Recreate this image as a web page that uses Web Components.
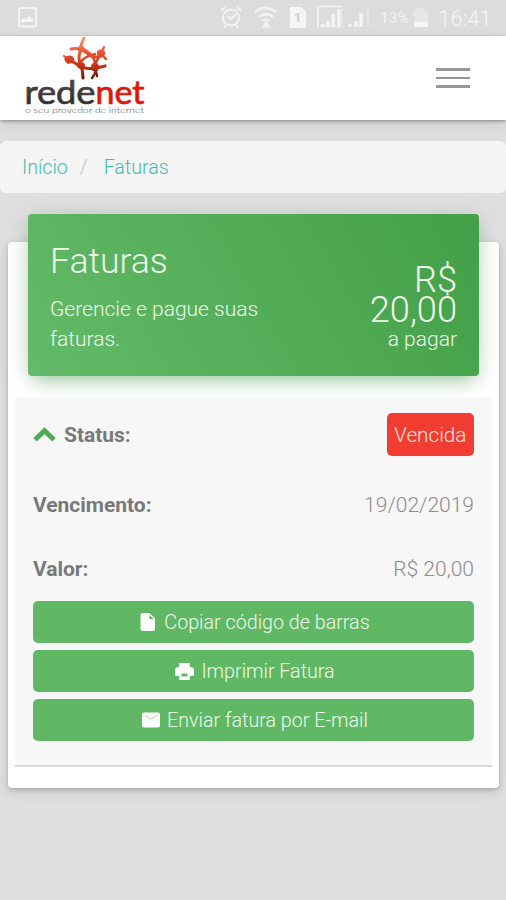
<!DOCTYPE html>
<html lang="pt-BR">
<head>
<meta charset="utf-8">
<title>Faturas</title>
<style>
html,body{margin:0;height:900px;overflow:hidden;background:#dfdfdf}
body{font-family:Roboto,"Liberation Sans",sans-serif;font-weight:300;font-size:20px;color:#777}
</style>
</head>
<body>
<invoice-app></invoice-app>
<script>
const define = (name, html) => {
  const t = document.createElement('template');
  t.innerHTML = html;
  customElements.define(name, class extends HTMLElement {
    constructor() {
      super();
      this.attachShadow({mode: 'open'}).append(t.content.cloneNode(true));
    }
  });
};

define('status-bar', `<style>
:host{display:block;height:36px;background:#dcdcdc;color:#f5f5f5}
svg{display:block}
text{font-family:Roboto,sans-serif;font-weight:400}
</style>
<svg width="506" height="36" viewBox="0 0 506 36" fill="none" stroke="#f3f3f3" stroke-width="2">
<rect x="19" y="8" width="17" height="18.500" rx="1"/><path d="M21 22v-2l3-2 2 1 3-3 4 4v2z" fill="#f5f5f5" stroke="none"/>
<circle cx="231" cy="17.500" r="8"/><path d="M221 11l4-4M237 7l4 4M226 25l-2 3M236 25l2 3M227 16l4 3 5-5"/>
<path d="M255 12q10-8 21 0M259 17q7-6 14 0" stroke-width="2.500"/><path d="M262 21q4-3 8 0M263 28l3-6 3 6M266 22v6" />
<path d="M290 7h11l5 5v16h-16z" fill="#f5f5f5" stroke="none"/>
<path d="M318 27V6.500H342" stroke-width="1.500"/><path d="M318 27H342V7" stroke-width="1" stroke="#e8e8e8"/>
<path d="M323 27v-3M328 27v-6M333 27V14M339 27V9" stroke-width="3.500"/>
<path d="M350 27v-3M356 27v-6M361 27V13" stroke-width="3.500"/><path d="M368 27V8" stroke="#e6e6e6"/>
<path d="M418 8h6l4 3v11h-14V11z" fill="#e6e6e6" stroke="none"/><path d="M414 22h14v5h-14z" fill="#f5f5f5" stroke="none"/>
<text x="294" y="22" font-size="13" style="font-weight:700" fill="#cecece" stroke="none">1</text>
<text x="380" y="23" font-size="14.500" fill="#f1f1f1" stroke="none" textLength="29" lengthAdjust="spacingAndGlyphs">13%</text>
<text x="438.500" y="25.500" font-size="21.500" fill="#f4f4f4" stroke="none" textLength="53" style="font-weight:300">16:41</text>
</svg>`);

define('brand-logo', `<style>
:host{display:block;width:130px;height:84px}
svg{display:block}
</style>
<svg width="130" height="84" viewBox="20 36 130 84">
<defs>
<linearGradient id="g" x1="0" y1="37" x2="0" y2="79" gradientUnits="userSpaceOnUse"><stop offset="0" stop-color="#f99a80"/><stop offset=".35" stop-color="#ee5531"/><stop offset=".65" stop-color="#cf3514"/><stop offset="1" stop-color="#611408"/></linearGradient>
<linearGradient id="d" x1="0" y1="80" x2="0" y2="105" gradientUnits="userSpaceOnUse"><stop offset="0" stop-color="#55494b"/><stop offset="1" stop-color="#302a2d"/></linearGradient>
</defs>
<g fill="none" stroke="url(#g)" stroke-linecap="round">
<path d="M84 38Q80 46 81 50Q77 57 81 66Q83 71 83 78" stroke-width="3"/>
<path d="M71 49Q79 47 87 53T101 56" stroke-width="3"/>
<path d="M66 59Q73 61 80 66T105 66" stroke-width="3.200"/>
<path d="M83 49Q92 53 95 62T92 78" stroke-width="2.500"/>
<path d="M104 47Q101 54 95 64M101 54L106 59M79 64Q84 56 95 54M95 66L97 76" stroke-width="2.400"/>
<path d="M64 56L69 59L68 63" stroke-width="2"/>
</g>
<g fill="url(#g)"><ellipse cx="69.500" cy="59.500" rx="4.800" ry="4"/><ellipse cx="81" cy="49" rx="3.500" ry="3"/><ellipse cx="101" cy="53" rx="4.200" ry="3.500"/><ellipse cx="81" cy="65.500" rx="4" ry="3.300"/><ellipse cx="95" cy="67" rx="4" ry="4.500"/></g>
<text x="24.500" y="104.300" font-family="Lato" font-weight="400" font-size="33" textLength="71" lengthAdjust="spacingAndGlyphs" fill="url(#d)" stroke="#40383a" stroke-width=".7">rede</text>
<text x="95.500" y="104.300" font-family="Lato" font-weight="400" font-size="33" textLength="49" lengthAdjust="spacingAndGlyphs" fill="#df160c" stroke="#df160c" stroke-width=".7">net</text>
<text x="25" y="112.500" font-family="Lato" font-size="8" textLength="119" lengthAdjust="spacingAndGlyphs" fill="#4c4648">o seu provedor de internet</text>
</svg>`);

define('nav-bar', `<style>
:host{display:flex;justify-content:space-between;align-items:center;height:84px;padding:0 36px 0 20px;background:#fff;box-shadow:0 1px 3px rgba(0,0,0,.35),0 5px 12px rgba(0,0,0,.1)}
.menu{display:grid;gap:5.500px;width:34px}
.menu i{height:2.800px;background:#979797}
</style><brand-logo></brand-logo><div class="menu"><i></i><i></i><i></i></div>`);

define('bread-crumb', `<style>
:host{display:flex;align-items:center;height:52px;margin-top:21px;padding:0 22px;box-sizing:border-box;border-radius:6px;background:#f5f5f5;color:#45b9b6;font-size:19.600px}
i{font-style:normal;color:#c3c3c3;margin:0 16px 0 12px}
</style><slot name="home"></slot><i>/</i><slot name="page"></slot>`);

define('summary-banner', `<style>
:host{display:flex;justify-content:space-between;width:451px;height:162px;margin:-28px 0 0 20px;padding:0 22px;box-sizing:border-box;border-radius:4px;color:#edf9eb;background:linear-gradient(60deg,#64ba68,#43a047);box-shadow:0 6px 26px -10px rgba(76,175,80,.5),0 4px 24px rgba(0,0,0,.09),0 9px 12px -5px rgba(76,175,80,.25)}
h1{margin:28px 0 0;font-size:35.600px;line-height:38px;font-weight:300}
p{margin:15px 0 0;font-size:21px;line-height:29.500px;width:230px}
.total{display:flex;flex-direction:column;align-items:flex-end;margin-top:51px;text-align:right}
.amount{font-size:36.200px;line-height:30px;width:90px}
.note{font-size:21px;line-height:29px}
</style><div><h1><slot name="title"></slot></h1><p><slot name="text"></slot></p></div>
<div class="total"><div class="amount"><slot name="amount"></slot></div><div class="note"><slot name="note"></slot></div></div>`);

define('detail-row', `<style>
:host{display:flex;align-items:center;justify-content:space-between;height:63px}
b{display:flex;align-items:center;gap:8px;font-weight:700;color:#797979;font-size:21px;letter-spacing:-.02px}
span{color:#8c8c8c;font-size:21px}
</style><b><slot name="label"></slot></b><span><slot></slot></span>`);

define('status-badge', `<style>
:host{display:grid;place-items:center;width:87.500px;height:43.500px;border-radius:5px;background:#f13c32;color:#ffe4dc;font-size:20.700px}
</style><slot></slot>`);

define('chevron-up', `<style>:host{display:block;height:16px}svg{display:block}</style>
<svg width="23" height="16" viewBox="0 0 23 16"><path d="M2 12.800L11.500 3.800L21 12.800" fill="none" stroke="#4caf50" stroke-width="5"/></svg>`);

define('action-button', `<style>
:host{display:flex;align-items:center;justify-content:center;height:42px;margin-bottom:7px;padding-left:3px;border-radius:5px;background:#60b864;color:#edf9eb;font-size:19.700px}
::slotted(svg){display:block;fill:#fff;margin-right:7px}
</style><slot name="icon"></slot><slot></slot>`);

define('invoice-card', `<style>
:host{display:flow-root;width:491px;height:546px;margin:49px 0 0 8px;background:#fff;border-radius:4px;box-shadow:0 2px 4px rgba(0,0,0,.18),0 4px 14px rgba(0,0,0,.1)}
.panel{box-sizing:border-box;margin:21px 7px 0;padding:6px 18px 0;height:370px;background:#f7f7f7;border-bottom:2px solid #d8d8d8}
</style>
<summary-banner><span slot="title">Faturas</span><span slot="text">Gerencie e pague suas faturas.</span><span slot="amount">R$ 20,00</span><span slot="note">a pagar</span></summary-banner>
<div class="panel">
<detail-row><chevron-up slot="label"></chevron-up><span slot="label">Status:</span><status-badge>Vencida</status-badge></detail-row>
<detail-row style="height:77px"><span slot="label">Vencimento:</span>19/02/2019</detail-row>
<detail-row style="height:51px;margin-bottom:7px"><span slot="label">Valor:</span>R$ 20,00</detail-row>
<action-button><svg slot="icon" width="17" height="20" viewBox="0 0 17 20"><path fill-rule="evenodd" d="M2.500 1h7l5.500 5.500v10.500q0 2-2 2H2.500q-2 0-2-2V3q0-2 2-2zM9.500 3v4h4z"/></svg>Copiar código de barras</action-button>
<action-button><svg slot="icon" width="19" height="18" viewBox="0 0 19 18"><path fill-rule="evenodd" d="M4 1h11v4q4 0 4 3v5q0 1-4 1v3q0 1-1 1H5q-1 0-1-1v-3q-4 0-4-1V8q0-3 4-3zM6.500 11.500h6v3h-6z"/></svg>Imprimir Fatura</action-button>
<action-button><svg slot="icon" width="18" height="18" viewBox="0 0 18 18"><path d="M2 1.500h14q2 0 2 2v11q0 2-2 2H2q-2 0-2-2v-11q0-2 2-2z"/><path d="M3 4.500l6 3.500 6-3.500" style="fill:none;stroke:#b9e1ba;stroke-width:1.100"/></svg>Enviar fatura por E-mail</action-button>
</div>`);

define('invoice-app', `<style>:host{display:block;height:900px}</style>
<status-bar></status-bar><nav-bar></nav-bar>
<bread-crumb><span slot="home">Início</span><span slot="page">Faturas</span></bread-crumb>
<invoice-card></invoice-card>`);
</script>
</body>
</html>
